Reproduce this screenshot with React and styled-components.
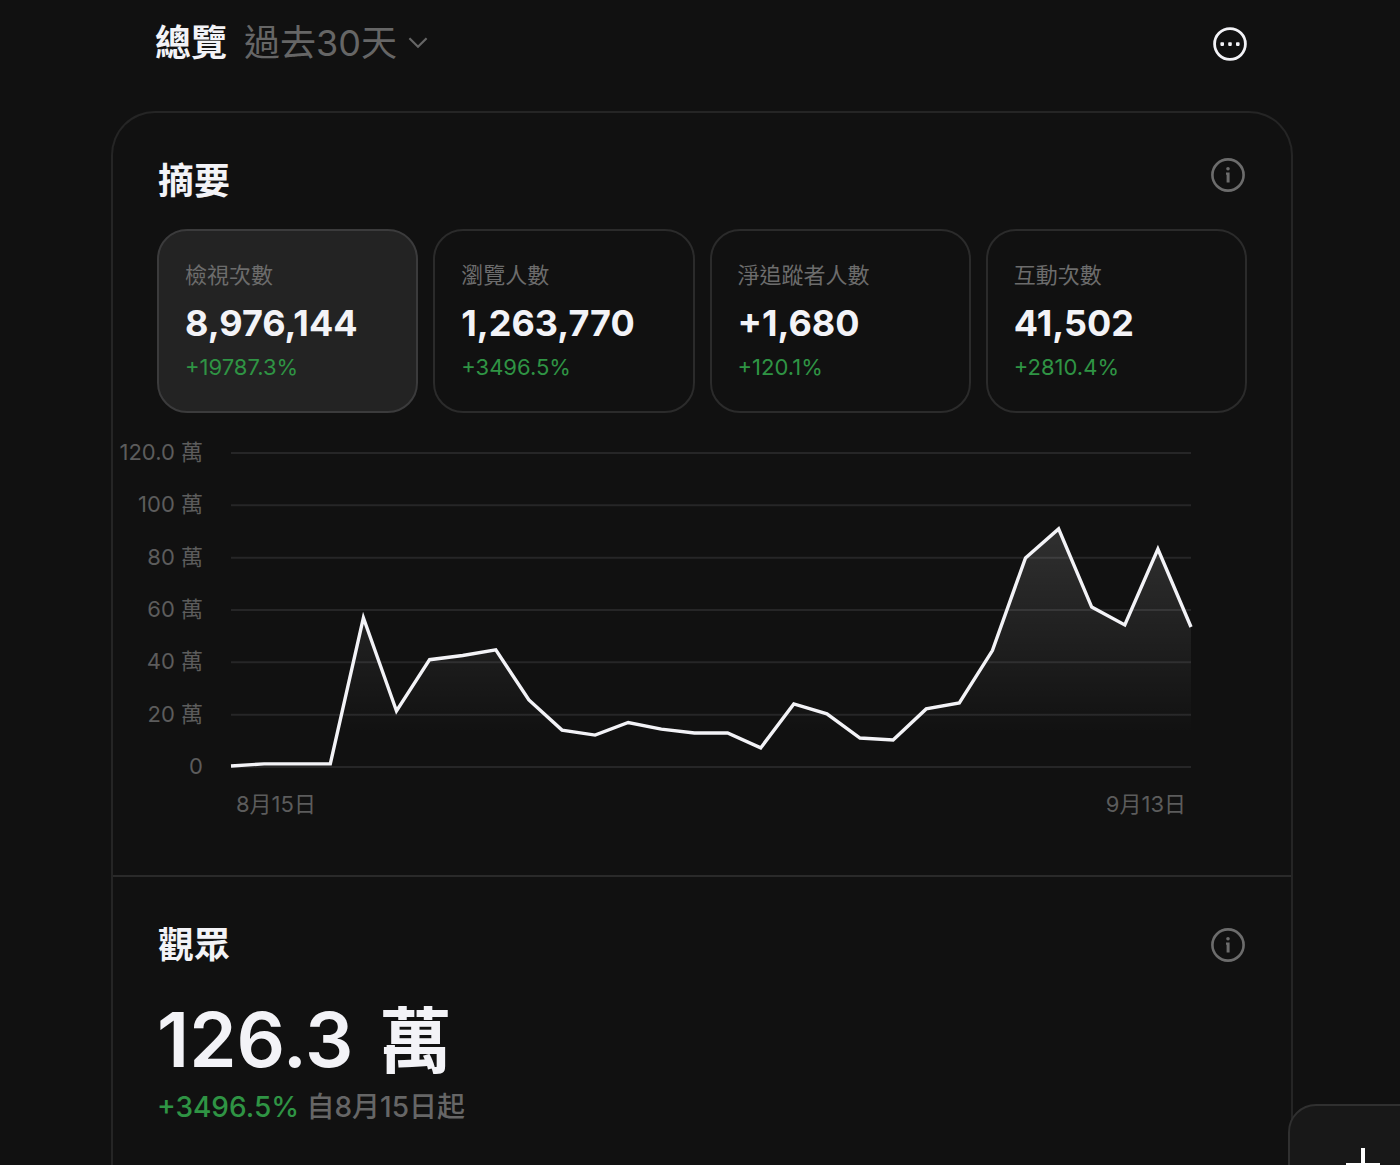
import React, { useState } from "react";
import styled, { createGlobalStyle } from "styled-components";

const GlobalStyle = createGlobalStyle`
  * {
    box-sizing: border-box;
  }

  body {
    margin: 0;
    background: #111111;
    color: #f3f3f7;
    font-family: Inter, "Noto Sans CJK TC", sans-serif;
  }

  button, select {
    margin: 0;
    padding: 0;
    border: none;
    background: none;
    color: inherit;
    font-family: inherit;
  }
`;

const Page = styled.div`
  display: flex;
  flex-direction: column;
  min-height: 100vh;
  padding: 0 107px 0 111px;
`;

const TopBar = styled.header`
  display: flex;
  align-items: center;
  justify-content: space-between;
  height: 87px;
  margin-bottom: 24px;
  padding: 0 46px 0 44px;
`;

const TopLeft = styled.div`
  display: flex;
  align-items: center;
  padding-bottom: 2px;
`;

const PageTitle = styled.h1`
  margin: 0 17px 0 0;
  font-size: 36px;
  line-height: 48px;
  font-weight: 600;
`;

const RangeLabel = styled.label`
  display: flex;
  align-items: center;
  gap: 11px;
  color: #666666;
`;

const RangeSelect = styled.select`
  appearance: none;
  height: 48px;
  font-size: 36px;
  line-height: 48px;
  font-weight: 400;
  cursor: pointer;
`;

const IconButton = styled.button`
  display: flex;
  color: ${(props) => (props.$muted ? "#6c6c6c" : "#f3f3f7")};
  margin-bottom: ${(props) => (props.$raised ? "12px" : "0")};
  cursor: pointer;
`;

const Card = styled.main`
  flex: 1;
  border: 2px solid #252525;
  border-bottom: none;
  border-radius: 44px 44px 0 0;
`;

const Section = styled.section`
  padding: 44px 0 55px;

  & + & {
    border-top: 2px solid #2a2a2a;
    padding-bottom: 0;
  }
`;

const SectionHead = styled.div`
  display: flex;
  align-items: center;
  justify-content: space-between;
  height: 48px;
  padding: 0 46px 0 45px;
`;

const SectionTitle = styled.h2`
  margin: 0;
  font-size: 36px;
  line-height: 48px;
  font-weight: 600;
`;

const StatGrid = styled.div`
  display: grid;
  grid-template-columns: repeat(4, 1fr);
  gap: 15px;
  padding: 0 44px;
  margin-top: 24px;
`;

const StatCard = styled.button`
  display: flex;
  flex-direction: column;
  align-items: flex-start;
  height: 184px;
  padding: 28px 26px;
  border: 2px solid ${(props) => (props.$active ? "#3b3b3c" : "#2b2b2b")};
  border-radius: 30px;
  background: ${(props) => (props.$active ? "#232323" : "transparent")};
  text-align: left;
  cursor: pointer;
`;

const StatName = styled.span`
  font-size: 22px;
  line-height: 32px;
  color: #6c6c6c;
`;

const StatValue = styled.span`
  margin-top: 8px;
  font-size: 36px;
  line-height: 48px;
  font-weight: 700;
`;

const StatChange = styled.span`
  font-size: 22px;
  line-height: 40px;
  color: #2f9444;
`;

const Chart = styled.div`
  display: grid;
  grid-template-columns: 90px 1fr;
  column-gap: 28px;
  padding-right: 100px;
  margin-top: 27px;
`;

const Axis = styled.div`
  display: flex;
  flex-direction: column;
  justify-content: space-between;
  height: 338px;
  color: #5c5c5c;
  font-size: 22px;
  line-height: 24px;
  text-align: right;
  white-space: nowrap;
`;

const Plot = styled.svg`
  display: block;
  width: 100%;
  height: 314px;
  margin-top: 13px;
  overflow: visible;
`;

const Dates = styled.div`
  grid-column: 2;
  display: flex;
  justify-content: space-between;
  padding: 0 5px;
  margin-top: 10px;
  color: #5c5c5c;
  font-size: 22px;
  line-height: 32px;
`;

const Total = styled.p`
  display: flex;
  align-items: baseline;
  gap: 26px;
  margin: 20px 0 0;
  padding: 0 44px;
  font-size: 76px;
  line-height: 100px;
  font-weight: 600;
`;

const Unit = styled.span`
  font-size: 72px;
`;

const TotalChange = styled.p`
  margin: 0;
  padding: 0 44px;
  font-size: 28px;
  line-height: 32px;
  font-weight: 500;
  color: #666666;
`;

const Up = styled.span`
  color: #2f9444;
`;

const ComposeButton = styled.button`
  position: fixed;
  right: -38px;
  bottom: -61px;
  display: flex;
  align-items: center;
  justify-content: center;
  width: 150px;
  height: 122px;
  border: 2px solid #303030;
  border-radius: 28px;
  background: #181818;
  color: #ffffff;
  cursor: pointer;
`;

const stats = [
  { name: "檢視次數", value: "8,976,144", change: "+19787.3%" },
  { name: "瀏覽人數", value: "1,263,770", change: "+3496.5%" },
  { name: "淨追蹤者人數", value: "+1,680", change: "+120.1%" },
  { name: "互動次數", value: "41,502", change: "+2810.4%" },
];

const ticks = ["120.0 萬", "100 萬", "80 萬", "60 萬", "40 萬", "20 萬", "0"];

// daily views, in units of 萬
const views = [
  0.4, 1.2, 1.2, 1.2, 57, 21.4, 41, 42.6, 44.8, 25.6, 14.1, 12.2, 17, 14.5,
  13, 13, 7.3, 24.1, 20.3, 11.1, 10.3, 22.2, 24.5, 44.5, 79.9, 91, 61.1, 54.3,
  83.3, 53.5,
];

const WIDTH = 960;
const HEIGHT = 314;
const MAX = 120;

const points = views.map((v, i) => {
  const x = (i * WIDTH) / (views.length - 1);
  const y = HEIGHT - (v / MAX) * HEIGHT;
  return x.toFixed(1) + "," + y.toFixed(1);
});

function ViewsPlot() {
  return (
    <Plot
      viewBox={`0 0 ${WIDTH} ${HEIGHT}`}
      preserveAspectRatio="none"
      role="img"
      aria-label="檢視次數"
    >
      <defs>
        <linearGradient id="fill" x1="0" y1="0" x2="0" y2="1">
          <stop offset="0" stopColor="#ffffff" stopOpacity="0.13" />
          <stop offset="0.86" stopColor="#ffffff" stopOpacity="0" />
        </linearGradient>
      </defs>
      {ticks.map((tick, i) => {
        const y = (i * HEIGHT) / (ticks.length - 1);
        return (
          <line
            key={tick}
            x1="0"
            x2={WIDTH}
            y1={y}
            y2={y}
            stroke="#262627"
            strokeWidth="2"
            vectorEffect="non-scaling-stroke"
          />
        );
      })}
      <polygon
        points={`0,${HEIGHT} ${points.join(" ")} ${WIDTH},${HEIGHT}`}
        fill="url(#fill)"
      />
      <polyline
        points={points.join(" ")}
        fill="none"
        stroke="#f3f3f7"
        strokeWidth="3.4"
        vectorEffect="non-scaling-stroke"
      />
    </Plot>
  );
}

function MoreIcon() {
  return (
    <svg width="34" height="34" viewBox="0 0 34 34" fill="currentColor">
      <circle
        cx="17"
        cy="17"
        r="15.4"
        fill="none"
        stroke="currentColor"
        strokeWidth="2.8"
      />
      <rect x="7.4" y="15.3" width="3.6" height="3.6" rx="0.8" />
      <rect x="15.2" y="15.3" width="3.6" height="3.6" rx="0.8" />
      <rect x="23" y="15.3" width="3.6" height="3.6" rx="0.8" />
    </svg>
  );
}

function InfoIcon() {
  return (
    <svg width="34" height="34" viewBox="0 0 34 34" fill="currentColor">
      <circle
        cx="17"
        cy="17"
        r="15.6"
        fill="none"
        stroke="currentColor"
        strokeWidth="2.6"
      />
      <circle cx="17" cy="10.8" r="1.8" />
      <path d="M15 14.6h3.6v10h-3v-7.8H15z" />
    </svg>
  );
}

function ChevronIcon() {
  return (
    <svg width="20" height="12" viewBox="0 0 20 12" fill="none">
      <path d="M1.4 1.2L10 9.8l8.6-8.6" stroke="currentColor" strokeWidth="2.2" />
    </svg>
  );
}

function App() {
  const [active, setActive] = useState(0);

  return (
    <>
      <GlobalStyle />
      <Page>
        <TopBar>
          <TopLeft>
            <PageTitle>總覽</PageTitle>
            <RangeLabel>
              <RangeSelect aria-label="期間">
                <option>過去30天</option>
              </RangeSelect>
              <ChevronIcon />
            </RangeLabel>
          </TopLeft>
          <IconButton type="button" aria-label="更多">
            <MoreIcon />
          </IconButton>
        </TopBar>

        <Card>
          <Section>
            <SectionHead>
              <SectionTitle>摘要</SectionTitle>
              <IconButton type="button" aria-label="摘要說明" $muted $raised>
                <InfoIcon />
              </IconButton>
            </SectionHead>
            <StatGrid>
              {stats.map((stat, i) => (
                <StatCard
                  key={stat.name}
                  type="button"
                  aria-pressed={i === active}
                  $active={i === active}
                  onClick={() => setActive(i)}
                >
                  <StatName>{stat.name}</StatName>
                  <StatValue>{stat.value}</StatValue>
                  <StatChange>{stat.change}</StatChange>
                </StatCard>
              ))}
            </StatGrid>
            <Chart>
              <Axis>
                {ticks.map((tick) => (
                  <span key={tick}>{tick}</span>
                ))}
              </Axis>
              <ViewsPlot />
              <Dates>
                <span>8月15日</span>
                <span>9月13日</span>
              </Dates>
            </Chart>
          </Section>

          <Section>
            <SectionHead>
              <SectionTitle>觀眾</SectionTitle>
              <IconButton type="button" aria-label="觀眾說明" $muted>
                <InfoIcon />
              </IconButton>
            </SectionHead>
            <Total>
              <span>126.3</span> <Unit>萬</Unit>
            </Total>
            <TotalChange>
              <Up>+3496.5%</Up> 自8月15日起
            </TotalChange>
          </Section>
        </Card>
      </Page>
      <ComposeButton type="button" aria-label="建立">
        <svg width="34" height="34" viewBox="0 0 34 34" fill="none">
          <path d="M17 0v34M0 17h34" stroke="currentColor" strokeWidth="4" />
        </svg>
      </ComposeButton>
    </>
  );
}

export default App;
